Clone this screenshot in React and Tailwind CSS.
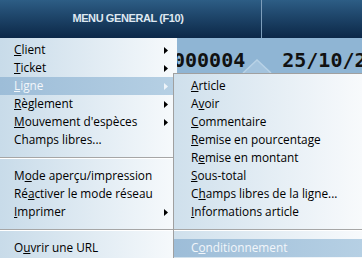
import React from "react";

const leftItems = [
  { pre: "", key: "C", post: "lient", arrow: true },
  { pre: "", key: "T", post: "icket", arrow: true },
  { pre: "", key: "L", post: "igne", arrow: true, active: true },
  { pre: "", key: "R", post: "èglement", arrow: true },
  { pre: "", key: "M", post: "ouvement d'espèces", arrow: true },
  { pre: "Champs libres...", key: "", post: "" },
  { sep: true },
  { pre: "M", key: "o", post: "de aperçu/impression" },
  { pre: "Ré", key: "a", post: "ctiver le mode réseau" },
  { pre: "", key: "I", post: "mprimer", arrow: true },
  { sep: true },
  { pre: "O", key: "u", post: "vrir une URL" },
];

const subItems = [
  { pre: "", key: "A", post: "rticle" },
  { pre: "A", key: "v", post: "oir" },
  { pre: "", key: "C", post: "ommentaire" },
  { pre: "", key: "R", post: "emise en pourcentage" },
  { pre: "R", key: "e", post: "mise en montant" },
  { pre: "", key: "S", post: "ous-total" },
  { pre: "C", key: "h", post: "amps libres de la ligne..." },
  { pre: "", key: "I", post: "nformations article" },
  { sep: true },
  { pre: "C", key: "o", post: "nditionnement", active: true },
];

const Arrow = ({ light }) => (
  <svg width="4" height="7" viewBox="0 0 4 7" className="absolute right-[9px] top-[6px]">
    <path d="M0 0 L4 3.5 L0 7 Z" fill={light ? "#eef4f9" : "#000"} />
  </svg>
);

const Row = ({ item, pl }) => {
  if (item.sep) {
    return (
      <div className="h-[18px] flex flex-col justify-center">
        <div className="h-px bg-[#a6a6a6]" />
        <div className="h-px bg-white" />
      </div>
    );
  }
  return (
    <div
      className={
        "relative h-[18px] flex items-center whitespace-nowrap " +
        pl +
        (item.active
          ? " bg-gradient-to-r from-[#9dbdd8] to-[#b6d0e4] text-[#f2f6fa]"
          : " text-black")
      }
    >
      <span>
        {item.pre}
        {item.key && (
          <span className="underline decoration-1 underline-offset-[1px]">{item.key}</span>
        )}
        {item.post}
      </span>
      {item.arrow && <Arrow light={item.active} />}
    </div>
  );
};

export default function App() {
  return (
    <div className="relative w-[362px] h-[258px] overflow-hidden bg-white">
      <div className="h-[38px] flex bg-gradient-to-b from-[#2d5d85] to-[#0c2848]">
        <div className="w-[261px] flex items-center justify-center pr-[5px] pb-px text-[11px] tracking-[-0.4px] font-bold text-[#dfe8f1] font-['Liberation_Sans',sans-serif]">
          MENU GENERAL (F10)
        </div>
        <div className="w-px bg-[#7d9ebb]" />
        <div className="flex-1" />
      </div>
      <div className="relative h-[220px] bg-[#8fb5d4]">
        <div className="flex items-end h-[32px] pl-[173px] font-['DejaVu_Sans_Mono',monospace] font-bold text-[20px] leading-none text-[#111] whitespace-pre">
          <span>000004</span>
          <span className="ml-[37px]">25/10/2024</span>
        </div>
        <svg width="30" height="14" viewBox="0 0 30 14" className="absolute left-[242px] top-[21px]">
          <path d="M1 14 L15 1 L29 14" fill="#a3c3dd" stroke="#b8d2e6" strokeWidth="1.5" />
        </svg>
      </div>

      <div className="absolute left-0 top-[38px] w-[177px] h-[220px] pt-[3px] bg-gradient-to-r from-[#c8dbe9] to-[#f7fafc] font-['Open_Sans',sans-serif] text-[11.8px]">
        {leftItems.map((it, i) => (
          <Row key={i} item={it} pl="pl-[14px]" />
        ))}
      </div>

      <div className="absolute left-[173px] top-[73px] right-0 bottom-0 pt-[3px] border-l border-t border-[#a0a0a0] bg-gradient-to-r from-[#cfe0ec] to-[#f8fafc] font-['Open_Sans',sans-serif] text-[11.8px]">
        {subItems.map((it, i) => (
          <Row key={i} item={it} pl="pl-[17px]" />
        ))}
      </div>
    </div>
  );
}
